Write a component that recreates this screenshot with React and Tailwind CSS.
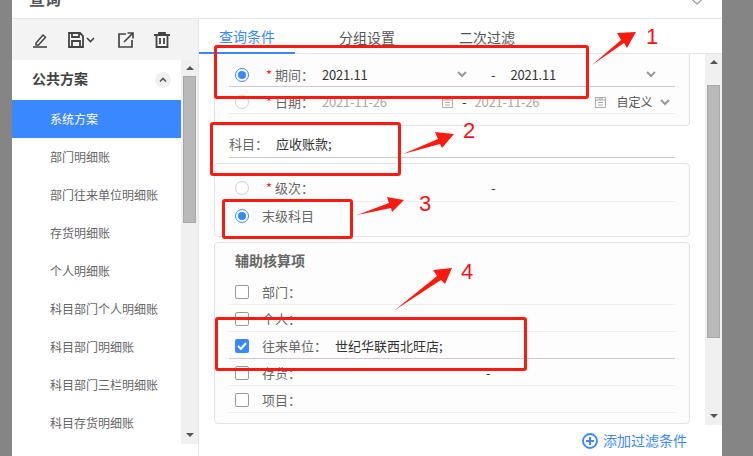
import React from "react";

const plans = ["部门明细账", "部门往来单位明细账", "存货明细账", "个人明细账", "科目部门个人明细账", "科目部门明细账", "科目部门三栏明细账", "科目存货明细账"];

const Chevron = ({ className = "" }) => (
  <svg width="10" height="7" viewBox="0 0 10 7" className={`shrink-0 ${className}`}>
    <path d="M1 1l4 4 4-4" fill="none" stroke="#999" strokeWidth="2" />
  </svg>
);

const CalendarIcon = () => (
  <svg width="11" height="12" viewBox="0 0 11 12" className="shrink-0">
    <path d="M.5 1.5h10v10H.5zM.5 4h10M3 3h5M3 6.5h5M3 9h5" fill="none" stroke="#aaa" />
  </svg>
);

const Radio = ({ on }) => (
  <span className={`w-[14px] h-[14px] shrink-0 rounded-full border flex items-center justify-center bg-white ${on ? "border-[#3a88ff]" : "border-[#d0d0d0]"}`}>
    {on && <span className="w-2 h-2 rounded-full bg-[#3a88ff]" />}
  </span>
);

const Check = ({ on }) =>
  on ? (
    <span className="w-[14px] h-[14px] shrink-0 rounded-[2px] bg-[#3a88ff] flex items-center justify-center">
      <svg width="10" height="8" viewBox="0 0 10 8">
        <path d="M1 4l3 3 5-6" fill="none" stroke="#fff" strokeWidth="2" />
      </svg>
    </span>
  ) : (
    <span className="w-[14px] h-[14px] shrink-0 rounded-[2px] border border-[#999] bg-white" />
  );

const AuxRow = ({ label, value, dash, on, dark }) => (
  <div className={`h-[27px] pt-[2px] flex items-center pl-[6px] border-b ${dark ? "border-[#ccc]" : "border-[#eee]"}`}>
    <Check on={on} />
    <span className="ml-[13px] text-[#666]">{label}</span>
    {value && <span className="ml-[8px] text-[#333]">{value}</span>}
    {dash && <span className="ml-[185px] text-[#333]">-</span>}
  </div>
);

const Thumbed = ({ top, height }) => (
  <div className="flex flex-col items-center bg-[#f0f0f0] h-full">
    <div className="w-0 h-0 mt-[6px] border-x-[4px] border-x-transparent border-b-[4px] border-b-[#555]" />
    <div className={`w-[13px] bg-[#b9b9b9] border border-[#a8a8a8] ${top} ${height}`} />
    <div className="mt-auto mb-[7px] w-0 h-0 border-x-[4px] border-x-transparent border-t-[4px] border-t-[#555]" />
  </div>
);

const Toolbar = () => (
  <div className="h-[41px] bg-[#f3f3f3] flex items-center pl-[21px] shrink-0">
    {/* pencil */}
    <svg width="15" height="16" viewBox="0 0 15 16">
      <path d="M3 11 10 3l2.5 2.2L5.5 13H3z" fill="none" stroke="#444" strokeWidth="1.5" />
      <path d="M0 15h14" stroke="#444" strokeWidth="1.6" />
    </svg>
    {/* save */}
    <svg width="16" height="16" viewBox="0 0 16 16" className="ml-[20px]">
      <path d="M1 1h11l3 3v11H1zM4 1v4h7V1M4 15V9h8v6" fill="none" stroke="#444" strokeWidth="1.8" />
    </svg>
    <svg width="9" height="6" viewBox="0 0 9 6" className="ml-[2px]">
      <path d="M1 1l3.5 3.5L8 1" fill="none" stroke="#444" strokeWidth="1.6" />
    </svg>
    {/* export */}
    <svg width="16" height="16" viewBox="0 0 16 16" className="ml-[23px]">
      <path d="M8 2H1v13h13V8M6 10l9-9M9.5 1H15v5.5" fill="none" stroke="#444" strokeWidth="1.7" />
    </svg>
    {/* trash */}
    <svg width="16" height="16" viewBox="0 0 16 16" className="ml-[20px]">
      <path d="M0 3h16M5 3V1h6v2M2.5 3v12h11V3M6 6v6M10 6v6" fill="none" stroke="#444" strokeWidth="1.8" />
    </svg>
  </div>
);

const Annotations = () => (
  <>
    <div className="absolute left-[214px] top-[45px] w-[375px] h-[54px] border-[3px] border-[#fb1a10] rounded-[3px]" />
    <div className="absolute left-[210px] top-[122px] w-[191px] h-[54px] border-[3px] border-[#fb1a10] rounded-[3px]" />
    <div className="absolute left-[222px] top-[199px] w-[131px] h-[40px] border-[3px] border-[#fb1a10] rounded-[3px]" />
    <div className="absolute left-[215px] top-[317px] w-[312px] h-[54px] border-[3px] border-[#fb1a10] rounded-[3px]" />
    <svg width="753" height="456" className="absolute left-0 top-0">
      <g fill="#fb1a10">
        <polygon points="592,65 621,40 617,33 636,32 627,48 624,43" />
        <polygon points="403,154 438,139 435,132 454,134 442,148 440,144" />
        <polygon points="357,215 389,203 387,197 404,200 392,212 391,208" />
        <polygon points="395,310 437,276 433,270 452,268 445,284 441,280" />
      </g>
    </svg>
    <span className="absolute left-[646px] top-[23px] text-[22px] leading-[28px] text-[#f5141c] [font-family:'Liberation_Sans',sans-serif]">1</span>
    <span className="absolute left-[463px] top-[117px] text-[22px] leading-[28px] text-[#f5141c] [font-family:'Liberation_Sans',sans-serif]">2</span>
    <span className="absolute left-[419px] top-[190px] text-[22px] leading-[28px] text-[#f5141c] [font-family:'Liberation_Sans',sans-serif]">3</span>
    <span className="absolute left-[461px] top-[258px] text-[22px] leading-[28px] text-[#f5141c] [font-family:'Liberation_Sans',sans-serif]">4</span>
  </>
);

export default function App() {
  return (
    <div className="relative w-[753px] h-[456px] overflow-hidden bg-[#858585] pl-[12px] text-[12px] [font-family:'Noto_Sans_CJK_SC','Noto_Sans',sans-serif]">
      <div className="w-[710px] h-full bg-white flex flex-col">
        {/* title, cut off by the top of the shot */}
        <div className="h-[19px] shrink-0 border-b border-[#e6e6e6] flex items-end justify-between pl-[17px] pr-[20px] overflow-hidden">
          <span className="text-[16px] leading-[24px] font-bold text-[#555] mb-[8px]">查询</span>
          <svg width="10" height="5" viewBox="0 0 10 5" className="mb-[13px]">
            <path d="M0.5 0l4.5 4 4.5-4" fill="none" stroke="#999" strokeWidth="1.2" />
          </svg>
        </div>

        <div className="flex-1 flex min-h-0">
          {/* left panel */}
          <div className="w-[187px] shrink-0 border-r border-[#e6e6e6] flex flex-col">
            <Toolbar />
            <div className="flex h-[384px]">
              <div className="w-[169px]">
                <div className="h-[40px] flex items-center justify-between pl-[20px] pr-[10px]">
                  <span className="text-[14px] leading-[16px] pb-[4px] font-bold text-[#444]">公共方案</span>
                  <span className="w-4 h-4 rounded-full bg-[#f0f0f0] flex items-center justify-center">
                    <svg width="8" height="6" viewBox="0 0 8 6">
                      <path d="M1 4.5l3-3 3 3" fill="none" stroke="#555" strokeWidth="1.6" />
                    </svg>
                  </span>
                </div>
                <div className="h-[38px] pl-[38px] flex items-center bg-[#3a88ff] text-white">系统方案</div>
                {plans.map((p) => (
                  <div key={p} className="h-[38px] pl-[38px] flex items-center text-[#666]">{p}</div>
                ))}
              </div>
              <div className="w-[17px]">
                <Thumbed top="mt-[6px]" height="h-[147px]" />
              </div>
            </div>
          </div>

          {/* right panel */}
          <div className="flex-1 min-w-0 flex flex-col">
            <div className="h-[35px] shrink-0 flex border-b border-[#e6e6e6] text-[14px] text-[#555]">
              <div className="w-[96px] h-[35px] pl-[20px] pt-[2px] flex items-center text-[#3a88ff] border-b-2 border-[#3a88ff]">查询条件</div>
              <div className="ml-[44px] pt-[2px] flex items-center h-[35px]">分组设置</div>
              <div className="ml-[64px] pt-[2px] flex items-center h-[35px]">二次过滤</div>
            </div>

            <div className="flex h-[371px] shrink-0">
              <div className="w-[506px] px-[15px] text-[13px]">
                {/* period card, scrolled so its top is hidden */}
                <div className="border border-t-0 border-[#e3e3e3] rounded-b-[4px] px-[14px] pb-[11px] bg-[#fdfdfd]">
                  <div className="h-[33px] pt-[9px] flex items-center pl-[6px] border-b border-[#ccc] text-[#333]">
                    <Radio on />
                    <span className="w-[73px] shrink-0 pl-[17px]"><span className="text-[#f5222d]">*</span> <span className="text-[#666]">期间：</span></span>
                    <span className="w-[135px] shrink-0 tracking-[-0.2px]">2021.11</span>
                    <Chevron />
                    <span className="ml-[24px]">-</span>
                    <span className="ml-[15px] w-[135px] shrink-0 tracking-[-0.2px]">2021.11</span>
                    <Chevron />
                  </div>
                  <div className="h-[27px] pt-[4px] flex items-center pl-[6px] border-b border-[#eee] text-[#aaa]">
                    <Radio />
                    <span className="w-[73px] shrink-0 pl-[17px]"><span className="text-[#f5222d]">*</span> <span className="text-[#666]">日期：</span></span>
                    <span className="w-[120px] shrink-0 tracking-[-0.2px]">2021-11-26</span>
                    <CalendarIcon />
                    <span className="ml-[9px] text-[#333]">-</span>
                    <span className="ml-[8px] w-[120px] shrink-0 tracking-[-0.2px]">2021-11-26</span>
                    <CalendarIcon />
                    <span className="ml-[11px] text-[12px] text-[#555]">自定义</span>
                    <Chevron className="ml-[7px]" />
                  </div>
                </div>

                <div className="mx-[15px] h-[32px] pt-[4px] flex items-center border-b border-[#ccc]">
                  <span className="text-[#666]">科目：</span>
                  <span className="ml-[8px] text-[#333]">应收账款;</span>
                </div>

                <div className="mt-[5px] h-[74px] border border-[#e3e3e3] rounded-[4px] px-[14px] pt-[11px] bg-[#fdfdfd]">
                  <div className="h-[27px] flex items-center pl-[6px] border-b border-[#eee]">
                    <Radio />
                    <span className="w-[242px] shrink-0 pl-[17px]"><span className="text-[#f5222d]">*</span> <span className="text-[#666]">级次：</span></span>
                    <span className="text-[#333]">-</span>
                  </div>
                  <div className="h-[27px] flex items-center pl-[6px]">
                    <Radio on />
                    <span className="ml-[13px] text-[#666]">末级科目</span>
                  </div>
                </div>

                <div className="mt-[5px] border border-[#e3e3e3] rounded-[4px] px-[14px] pb-[10px] bg-[#fdfdfd]">
                  <div className="h-[35px] pl-[6px] flex items-center text-[14px] font-bold text-[#666]">辅助核算项</div>
                  <AuxRow label="部门：" />
                  <AuxRow label="个人：" />
                  <AuxRow label="往来单位：" value="世纪华联西北旺店;" on dark />
                  <AuxRow label="存货：" dash />
                  <AuxRow label="项目：" />
                </div>
              </div>
              <div className="w-[17px]">
                <Thumbed top="mt-[21px]" height="h-[253px]" />
              </div>
            </div>

            <div className="flex-1 flex items-center justify-end pr-[35px] text-[14px] text-[#3a88ff]">
              <svg width="16" height="16" viewBox="0 0 16 16" className="mr-[5px]">
                <circle cx="8" cy="8" r="7" fill="none" stroke="#3a88ff" strokeWidth="1.8" />
                <path d="M4 8h8M8 4v8" stroke="#3a88ff" strokeWidth="2" />
              </svg>
              添加过滤条件
            </div>
          </div>
        </div>
      </div>
      <Annotations />
    </div>
  );
}
